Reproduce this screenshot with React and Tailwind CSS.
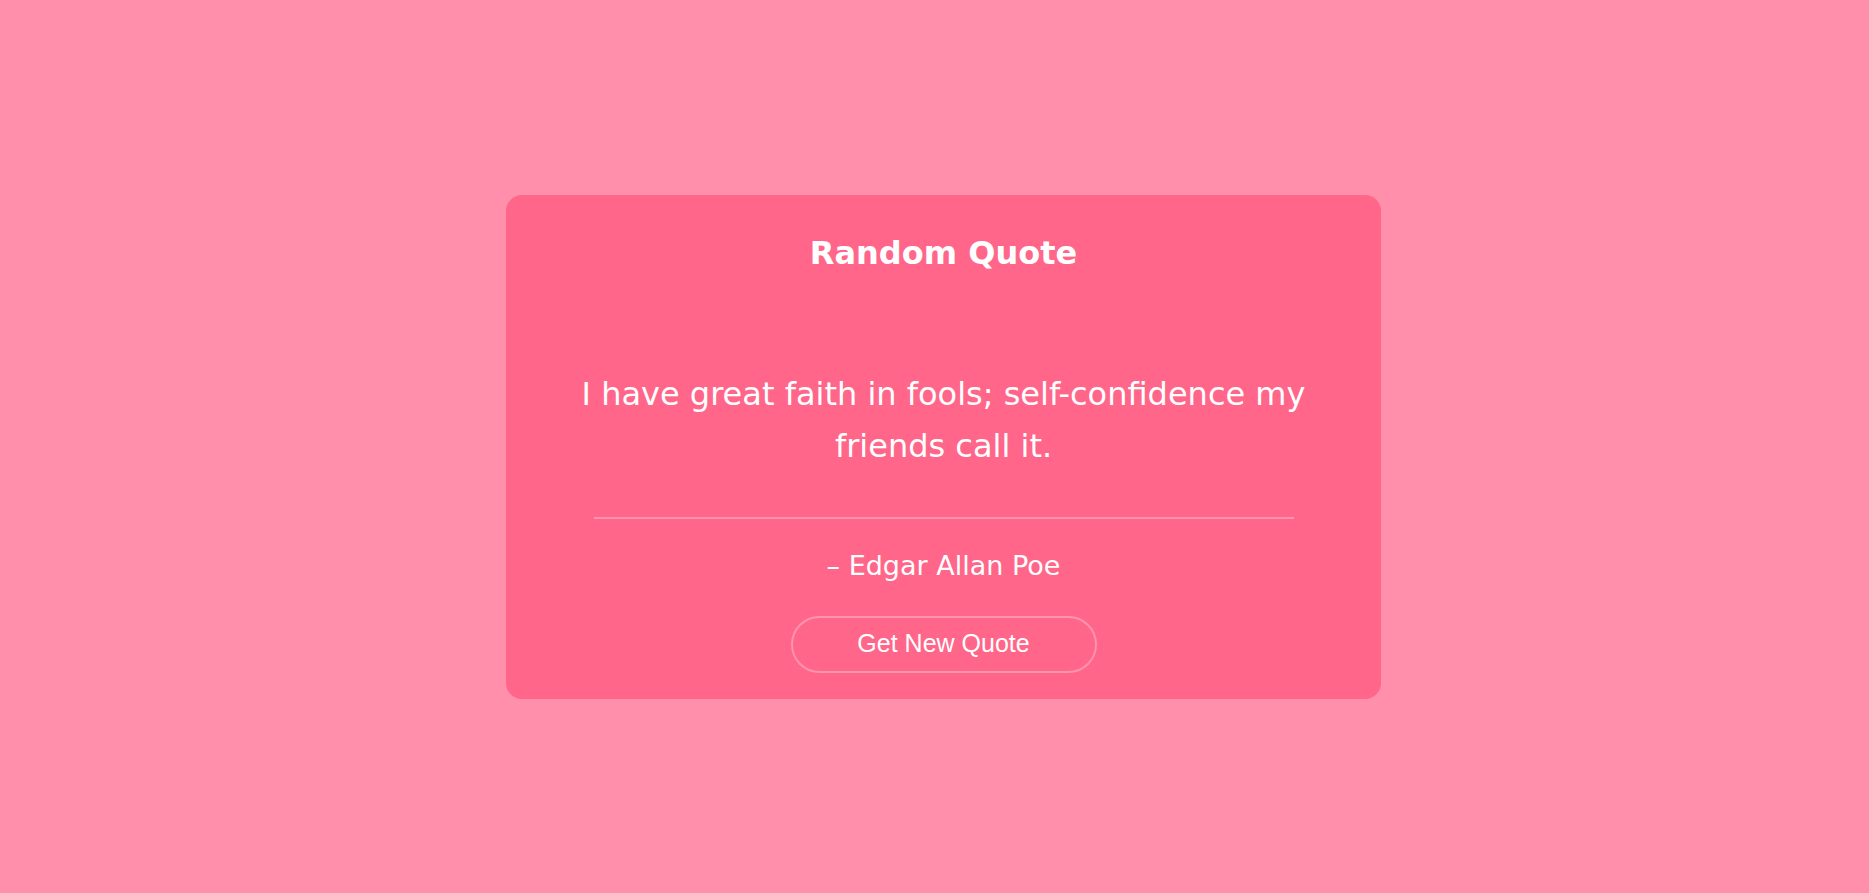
export default function App() {
  return (
    <div className="min-h-[893px] w-full bg-[#ff8fab] flex items-center justify-center pl-[18px]">
      <div className="w-[875px] h-[504px] rounded-[16px] bg-[#ff6689] flex flex-col items-center pt-[37px] text-white" style={{ fontFamily: '"DejaVu Sans", sans-serif' }}>
        <h1 className="text-[32px] leading-[43px] font-bold">Random Quote</h1>
        <p className="mt-[93px] px-[40px] text-center text-[32px] leading-[52px]">I have great faith in fools; self-confidence my friends call it.</p>
        <div className="mt-[45px] w-[80%] h-[2px] bg-white/30"></div>
        <p className="mt-[28px] text-[27px] leading-[37px]">– Edgar Allan Poe</p>
        <button className="mt-[32px] w-[306px] h-[57px] rounded-full border-2 border-white/30 text-[25px] text-white" style={{ fontFamily: '"Liberation Sans", Arial, sans-serif' }}>Get New Quote</button>
      </div>
    </div>
  );
}
